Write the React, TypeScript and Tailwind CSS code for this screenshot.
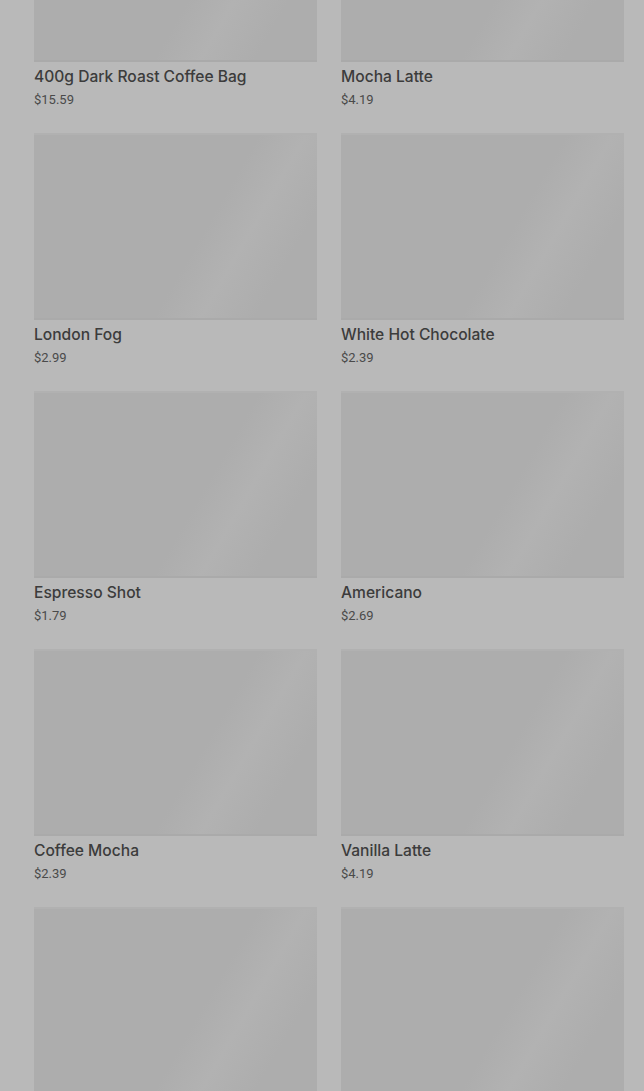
import React from "react";

const items = [
  { name: "400g Dark Roast Coffee Bag", price: "$15.59" },
  { name: "Mocha Latte", price: "$4.19" },
  { name: "London Fog", price: "$2.99" },
  { name: "White Hot Chocolate", price: "$2.39" },
  { name: "Espresso Shot", price: "$1.79" },
  { name: "Americano", price: "$2.69" },
  { name: "Coffee Mocha", price: "$2.39" },
  { name: "Vanilla Latte", price: "$4.19" },
];

function Img() {
  return (
    <div className="h-[187px] w-full bg-[linear-gradient(120deg,#adadad_0%,#adadad_58%,#b2b2b2_70%,#adadad_84%,#adadad_100%)] border-t-2 border-b-2 border-t-[#b1b1b1] border-b-[#aaaaaa]" />
  );
}

function Card({ name, price }: { name: string; price: string }) {
  return (
    <div className="flex flex-col">
      <Img />
      <div
        className="mt-[4px] text-[15.6px] leading-[22px] font-medium text-[#3c3c3c]"
        style={{ fontFamily: "Inter, Roboto, sans-serif" }}
      >
        {name}
      </div>
      <div className="mt-[2px] text-[13px] leading-[20px] text-[#4a4a4a]">{price}</div>
    </div>
  );
}

export default function App() {
  return (
    <div
      className="w-[644px] h-[1091px] overflow-hidden bg-[#b9b9b9]"
      style={{ fontFamily: "Roboto, 'Noto Sans', sans-serif" }}
    >
      <div className="mt-[-125px] pl-[34px] pr-[20px] grid grid-cols-2 gap-x-[24px] gap-y-[23px]">
        {items.map((it) => (
          <Card key={it.name} name={it.name} price={it.price} />
        ))}
        <div className="flex flex-col">
          <Img />
        </div>
        <div className="flex flex-col">
          <Img />
        </div>
      </div>
    </div>
  );
}
